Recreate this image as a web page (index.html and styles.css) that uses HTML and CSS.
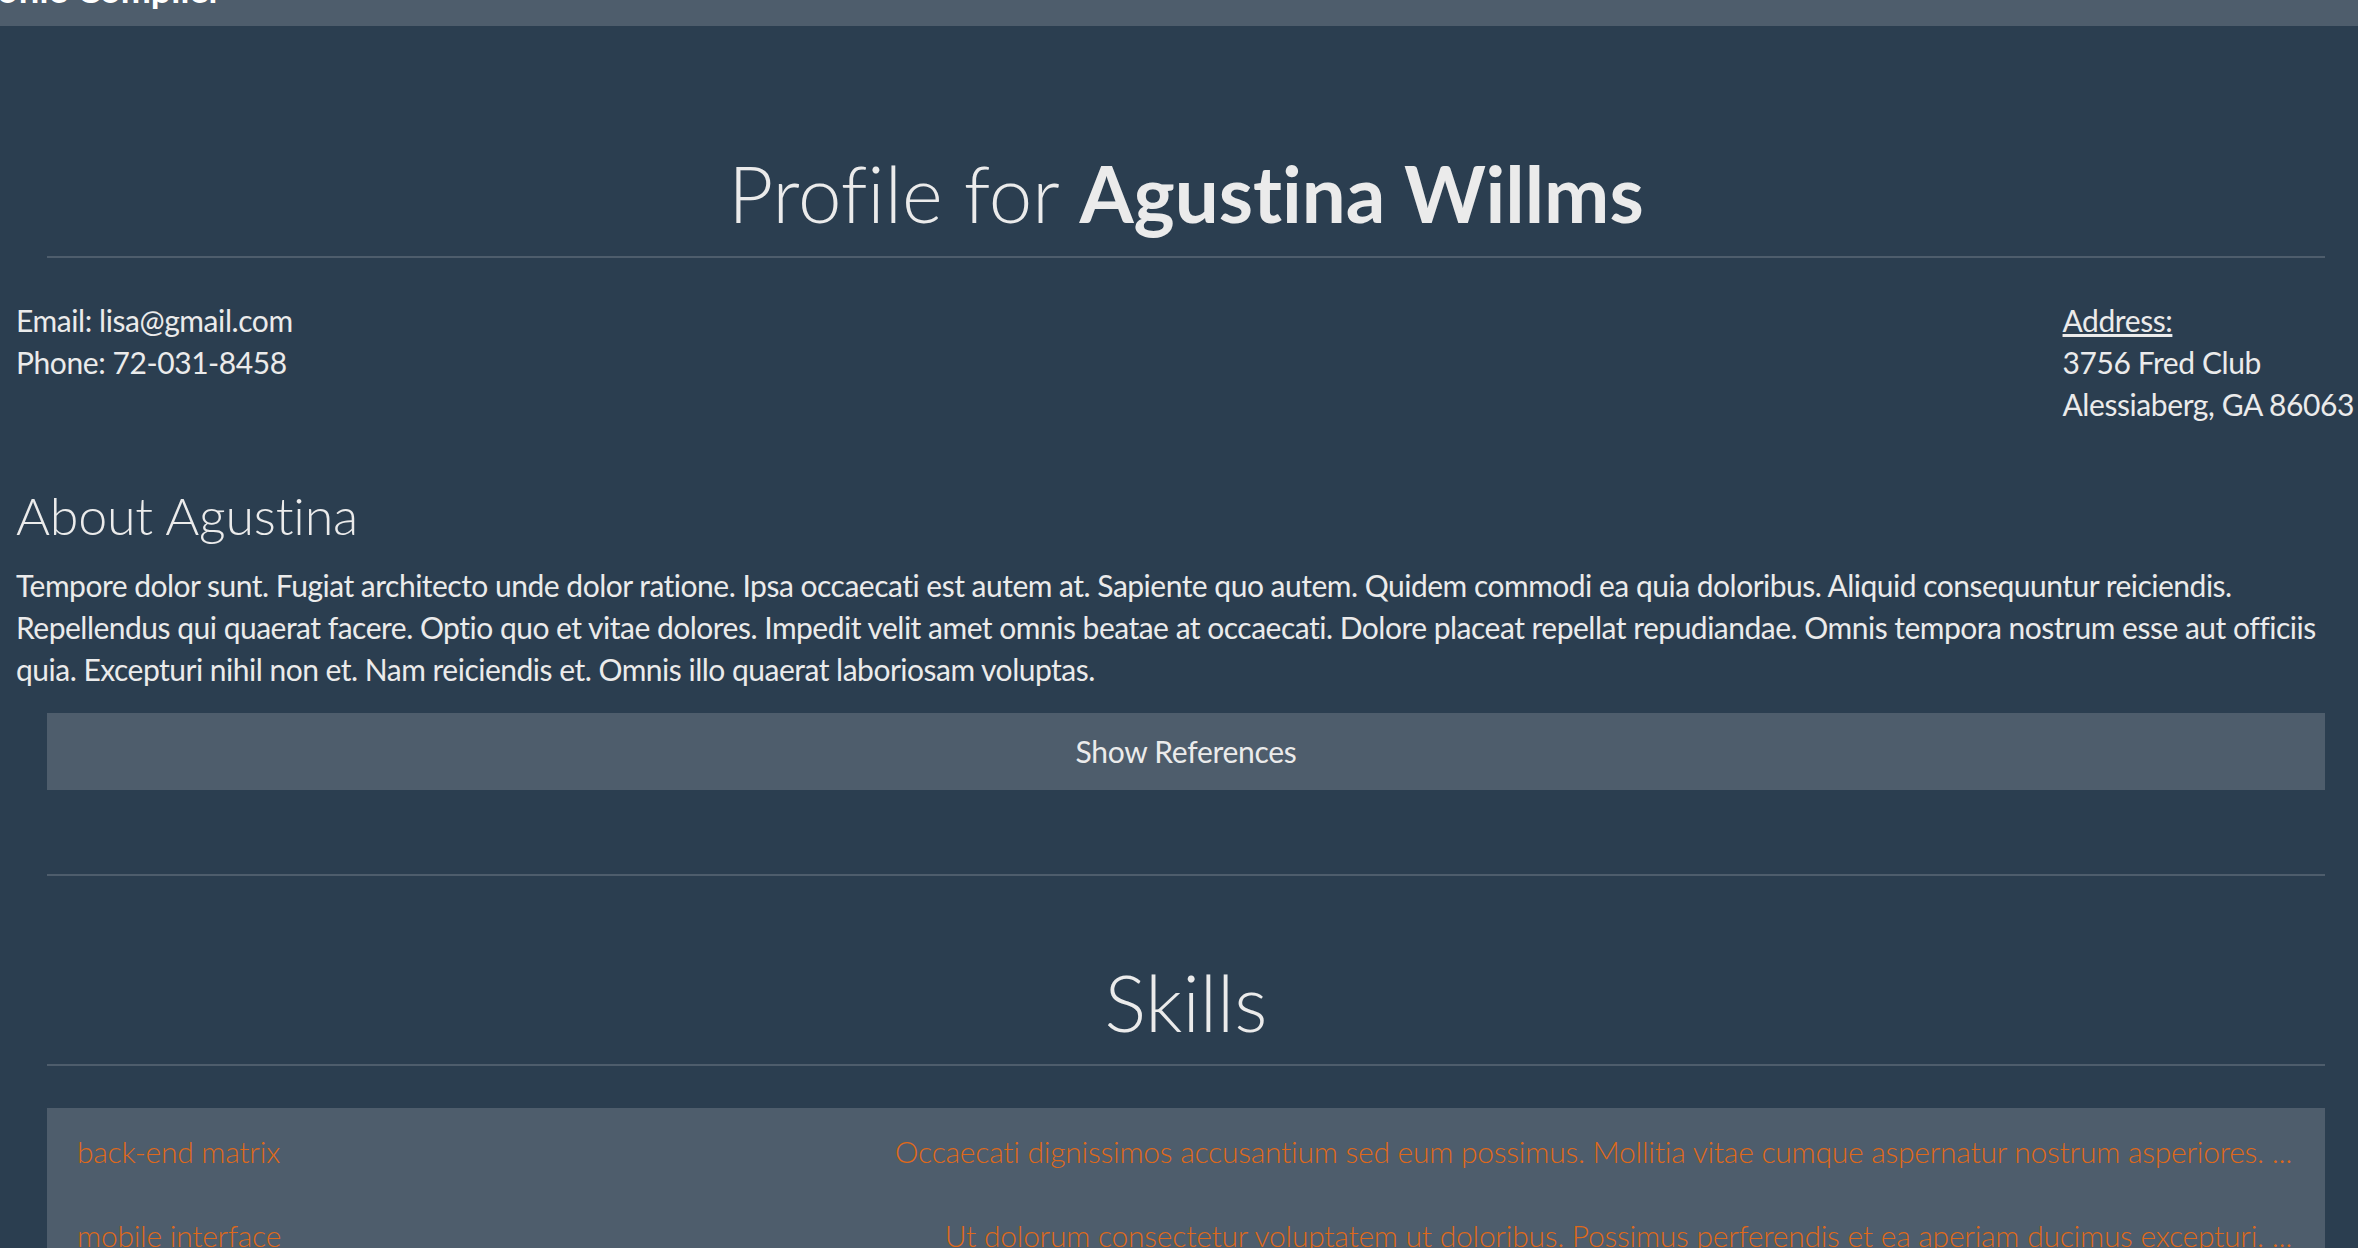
FILE: index.html
```html
<!DOCTYPE html>
<html lang="en">
<head>
<meta charset="utf-8">
<title>Profile for Agustina Willms</title>
<link rel="stylesheet" href="styles.css">
</head>
<body>
<nav class="navbar">
  <div class="brand-wrap"><span class="brand">Profile Compiler</span></div>
</nav>
<main class="container">
  <header class="page-header">
    <h1 class="title">Profile for <strong>Agustina Willms</strong></h1>
  </header>
  <section class="wide">
    <div class="contact">
      <div class="contact-left">
        <div>Email: lisa@gmail.com</div>
        <div>Phone: 72-031-8458</div>
      </div>
      <div class="contact-right">
        <div class="address-label">Address:</div>
        <div>3756 Fred Club</div>
        <div>Alessiaberg, GA 86063</div>
      </div>
    </div>
    <h3 class="about-title">About Agustina</h3>
    <p class="about-text">Tempore dolor sunt. Fugiat architecto unde dolor ratione. Ipsa occaecati est autem at. Sapiente quo autem. Quidem commodi ea quia doloribus. Aliquid consequuntur reiciendis. Repellendus qui quaerat facere. Optio quo et vitae dolores. Impedit velit amet omnis beatae at occaecati. Dolore placeat repellat repudiandae. Omnis tempora nostrum esse aut officiis quia. Excepturi nihil non et. Nam reiciendis et. Omnis illo quaerat laboriosam voluptas.</p>
  </section>
  <button class="btn-refs" type="button">Show References</button>
  <div class="divider"></div>
  <header class="page-header skills-header">
    <h1 class="title">Skills</h1>
  </header>
  <ul class="skill-list">
    <li class="skill"><span class="skill-name">back-end matrix</span><span class="skill-desc">Occaecati dignissimos accusantium sed eum possimus. Mollitia vitae cumque aspernatur nostrum asperiores. ...</span></li>
    <li class="skill"><span class="skill-name">mobile interface</span><span class="skill-desc">Ut dolorum consectetur voluptatem ut doloribus. Possimus perferendis et ea aperiam ducimus excepturi. ...</span></li>
  </ul>
</main>
</body>
</html>
```
FILE: styles.css
```css
html, body {
  margin: 0;
  padding: 0;
}
body {
  background: #2b3e50;
  color: #ebebeb;
  font-family: Lato, "Open Sans", "Liberation Sans", sans-serif;
  font-size: 30px;
  line-height: 42px;
  font-weight: 400;
  letter-spacing: -0.42px;
  font-variant-ligatures: none;
}
.navbar {
  height: 26px;
  background: #4e5d6c;
  overflow: hidden;
}
.brand-wrap {
  width: 222px;
  display: flex;
  justify-content: flex-end;
}
.brand {
  font-weight: 700;
  font-size: 36px;
  line-height: 36px;
  margin-top: -29px;
  white-space: nowrap;
  color: #ffffff;
  letter-spacing: 0;
}
.container {
  margin: 0 33px 0 47px;
}
.page-header {
  margin-top: 124px;
  padding-bottom: 20px;
  border-bottom: 2px solid #4e5d6c;
  text-align: center;
}
.title {
  margin: 0;
  font-size: 78px;
  line-height: 86px;
  font-weight: 300;
  letter-spacing: 0;
}
.title strong {
  font-weight: 700;
}
.wide {
  margin: 0 -29px 0 -31px;
}
.contact {
  display: flex;
  justify-content: space-between;
  margin-top: 41px;
}
.address-label {
  text-decoration: underline;
}
.about-title {
  margin: 62px 0 0;
  font-size: 52px;
  line-height: 57px;
  font-weight: 300;
  letter-spacing: -0.2px;
}
.about-text {
  margin: 20px 0 0;
  letter-spacing: -0.5px;
}
.btn-refs {
  display: block;
  width: 100%;
  margin-top: 23px;
  padding: 17px 0 18px;
  border: 0;
  background: #4e5d6c;
  color: #ebebeb;
  font-family: inherit;
  font-size: 30px;
  line-height: 42px;
  font-weight: 400;
  letter-spacing: -0.3px;
  font-variant-ligatures: none;
  text-align: center;
}
.divider {
  margin-top: 84px;
  border-top: 2px solid #4e5d6c;
}
.skills-header {
  margin-top: 83px;
  padding-bottom: 19px;
}
.skill-list {
  list-style: none;
  margin: 42px 0 0;
  padding: 0;
}
.skill {
  display: flex;
  justify-content: space-between;
  padding: 22px 33px 20px 30px;
  background: #4e5d6c;
  color: #df691a;
  font-weight: 300;
  letter-spacing: -0.25px;
  white-space: nowrap;
}
```
